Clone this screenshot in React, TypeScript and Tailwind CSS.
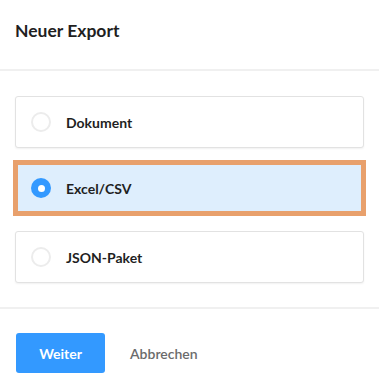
import React, { useState } from "react";

const options = [
  { id: "doc", label: "Dokument" },
  { id: "csv", label: "Excel/CSV" },
  { id: "json", label: "JSON-Paket" },
];

const Radio = ({ checked }: { checked: boolean }) =>
  checked ? (
    <span className="flex h-5 w-5 shrink-0 items-center justify-center rounded-full bg-[#3399ff]">
      <span className="h-[7px] w-[7px] rounded-full bg-white" />
    </span>
  ) : (
    <span className="h-5 w-5 shrink-0 rounded-full border-2 border-[#ececec] bg-white" />
  );

const App = () => {
  const [selected, setSelected] = useState("csv");

  return (
    <div
      className="h-[388px] w-[379px] bg-white text-[#1f1f1f]"
      style={{ fontFamily: "Lato, 'Open Sans', sans-serif" }}
    >
      <div className="flex h-[71px] items-center border-b-2 border-[#f0f0f0] pb-[6px] pl-[15px]">
        <h1 className="text-[17.5px] font-bold">Neuer Export</h1>
      </div>

      <div className="flex flex-col pt-[25px] pb-[24px]">
        {options.map((o) => {
          const active = o.id === selected;
          return (
            <button
              key={o.id}
              type="button"
              onClick={() => setSelected(o.id)}
              className={
                active
                  ? "mx-[13px] mt-[12px] mb-[15px] flex h-[56px] items-center border-[5px] border-[#e8a06c] bg-[#deeefd] pl-[13px] text-left"
                  : "mx-[15px] flex h-[52px] items-center rounded-[3px] border border-[#e2e2e2] bg-white pl-[15px] text-left shadow-[0_1px_2px_rgba(0,0,0,0.06)]"
              }
            >
              <Radio checked={active} />
              <span className="ml-[15px] text-[14px] font-bold">{o.label}</span>
            </button>
          );
        })}
      </div>

      <div className="flex items-center gap-[25px] border-t-2 border-[#f0f0f0] pl-[16px] pt-[24px]">
        <button
          type="button"
          className="h-[40px] w-[89px] rounded-[3px] bg-[#3399ff] text-[14px] font-bold text-white"
        >
          Weiter
        </button>
        <button type="button" className="text-[14px] font-semibold text-[#6b6b6b]">
          Abbrechen
        </button>
      </div>
    </div>
  );
};

export default App;
